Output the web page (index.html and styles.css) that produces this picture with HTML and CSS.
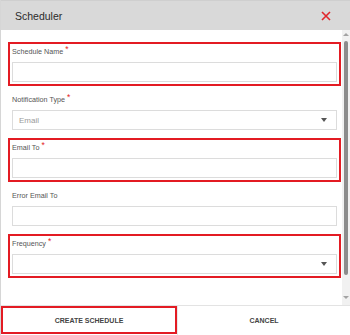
FILE: index.html
```html
<!DOCTYPE html>
<html>
<head>
<meta charset="utf-8">
<link rel="stylesheet" href="styles.css">
</head>
<body>
<div class="dialog">
  <div class="header">
    <span class="title">Scheduler</span>
    <svg class="close" width="10" height="10" viewBox="0 0 10 10"><path d="M1 1L9 9M9 1L1 9" stroke="#e0262b" stroke-width="1.6" fill="none"/></svg>
  </div>
  <div class="body">
    <div class="content">
      <div class="field hl">
        <div class="label">Schedule Name <span class="req">*</span></div>
        <div class="control"></div>
      </div>
      <div class="field">
        <div class="label">Notification Type <span class="req">*</span></div>
        <div class="control select"><span class="ph">Email</span><span class="caret"></span></div>
      </div>
      <div class="field hl">
        <div class="label">Email To <span class="req">*</span></div>
        <div class="control"></div>
      </div>
      <div class="field">
        <div class="label">Error Email To</div>
        <div class="control"></div>
      </div>
      <div class="field hl">
        <div class="label">Frequency <span class="req">*</span></div>
        <div class="control select"><span class="ph"></span><span class="caret"></span></div>
      </div>
    </div>
    <div class="scrollbar">
      <span class="arrow up"></span>
      <span class="thumb"></span>
      <span class="arrow down"></span>
    </div>
  </div>
  <div class="footer">
    <div class="btn primary">CREATE SCHEDULE</div>
    <div class="btn cancel">CANCEL</div>
  </div>
</div>
</body>
</html>
```
FILE: styles.css
```css
html, body {
  margin: 0;
  padding: 0;
  background: #fff;
}
body {
  width: 350px;
  height: 335px;
  overflow: hidden;
  font-family: "Liberation Sans", Arial, sans-serif;
}
.dialog {
  box-sizing: border-box;
  width: 350px;
  height: 335px;
  display: flex;
  flex-direction: column;
  border-left: 1px solid #d6d6d6;
}
.header {
  height: 30px;
  flex: none;
  background: #d9d9d9;
  border-top: 1px solid #cfcfcf;
  box-sizing: border-box;
  display: flex;
  align-items: center;
  justify-content: space-between;
  padding: 0 19px 0 14px;
}
.title {
  font-size: 10.5px;
  color: #2b2b2b;
}
.close {
  display: block;
}
.body {
  height: 275px;
  flex: none;
  display: flex;
}
.content {
  flex: 1;
  overflow: hidden;
  padding: 12px 1px 0 7px;
  display: flex;
  flex-direction: column;
  gap: 4px;
}
.field {
  border: 2px solid transparent;
  padding: 2px;
  height: 44px;
  box-sizing: border-box;
  flex: none;
}
.field.hl {
  border-color: #e31b23;
}
.label {
  font-size: 7.2px;
  line-height: 11px;
  height: 11px;
  color: #555;
  margin-bottom: 5px;
}
.req {
  color: #e31b23;
  font-size: 8.5px;
  position: relative;
  top: -2px;
}
.control {
  height: 20px;
  box-sizing: border-box;
  border: 1px solid #dcdcdc;
  display: flex;
  align-items: center;
  justify-content: space-between;
  padding: 0 9px 0 6px;
}
.ph {
  font-size: 8px;
  color: #999;
}
.caret {
  width: 0;
  height: 0;
  border-left: 3.5px solid transparent;
  border-right: 3.5px solid transparent;
  border-top: 4px solid #555;
}
.scrollbar {
  width: 8px;
  flex: none;
  background: #f1f1f1;
  display: flex;
  flex-direction: column;
  align-items: center;
}
.arrow {
  width: 0;
  height: 0;
  border-left: 3px solid transparent;
  border-right: 3px solid transparent;
}
.arrow.up {
  margin-top: 3px;
  border-bottom: 3px solid #a3a3a3;
}
.arrow.down {
  margin-top: auto;
  margin-bottom: 6px;
  border-top: 3px solid #a3a3a3;
}
.thumb {
  margin-top: 5px;
  width: 4px;
  height: 234px;
  background: #8c8c8c;
  border-radius: 2px;
}
.footer {
  flex: 1;
  display: flex;
  border-top: 1px solid #e3e3e3;
}
.btn {
  flex: 1;
  display: flex;
  align-items: center;
  justify-content: center;
  font-size: 7px;
  font-weight: bold;
  color: #444;
  box-sizing: border-box;
}
.btn.primary {
  border: 2px solid #e31b23;
  height: 28px;
}
.btn.cancel {
  border-left: 1px solid #e8e8e8;
}
```
